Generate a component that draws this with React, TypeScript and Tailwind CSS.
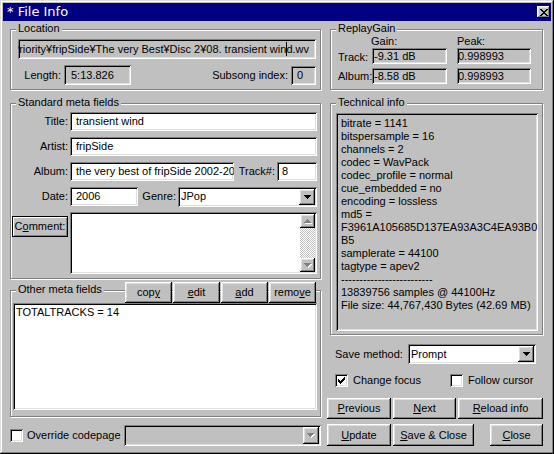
import React from 'react';

// Win98 style 3D edges
const sunken =
  'shadow-[inset_1px_1px_0_#808080,inset_-1px_-1px_0_#ffffff,inset_2px_2px_0_#000000,inset_-2px_-2px_0_#dfdfdf]';
const raised =
  'shadow-[inset_-1px_-1px_0_#000000,inset_1px_1px_0_#ffffff,inset_-2px_-2px_0_#808080,inset_2px_2px_0_#dfdfdf]';

function Pixels({ rows, color, shadow }: { rows: string[]; color: string; shadow?: string }) {
  const w = rows[0].length + (shadow ? 1 : 0);
  const h = rows.length + (shadow ? 1 : 0);
  const cells: React.ReactNode[] = [];
  rows.forEach((r, y) =>
    r.split('').forEach((c, x) => {
      if (c === 'x') {
        if (shadow) cells.push(<rect key={`s${x}-${y}`} x={x + 1} y={y + 1} width={1} height={1} fill={shadow} />);
      }
    })
  );
  rows.forEach((r, y) =>
    r.split('').forEach((c, x) => {
      if (c === 'x') cells.push(<rect key={`${x}-${y}`} x={x} y={y} width={1} height={1} fill={color} />);
    })
  );
  return (
    <svg width={w} height={h} viewBox={`0 0 ${w} ${h}`} shapeRendering="crispEdges">
      {cells}
    </svg>
  );
}

const downArrow = ['xxxxxxx', '.xxxxx.', '..xxx..', '...x...'];
const upArrow = ['...x...', '..xxx..', '.xxxxx.', 'xxxxxxx'];
const checkMark = ['......x', '.....xx', 'x...xxx', 'xx.xxx.', 'xxxxx..', '.xxx...', '..x....'];
const closeX = ['xx....xx', '.xx..xx.', '..xxxx..', '...xx...', '..xxxx..', '.xx..xx.', 'xx....xx'];

function Group({ label, className, children }: { label: string; className: string; children?: React.ReactNode }) {
  return (
    <div className={`relative border border-[#808080] shadow-[inset_1px_1px_0_#ffffff,1px_1px_0_#ffffff] ${className}`}>
      <span className="absolute left-[5px] top-[-8px] bg-[#c0c0c0] px-[2px] leading-[13px] whitespace-nowrap">{label}</span>
      {children}
    </div>
  );
}

function Edit({ value, className, gray }: { value: React.ReactNode; className: string; gray?: boolean }) {
  return (
    <div
      className={`flex items-center overflow-hidden whitespace-nowrap ${gray ? 'bg-[#c0c0c0]' : 'bg-white'} ${sunken} ${className}`}
    >
      {value}
    </div>
  );
}

function Combo({ value, className, disabled }: { value: string; className: string; disabled?: boolean }) {
  return (
    <div className={`flex items-stretch p-[2px] ${disabled ? 'bg-[#c0c0c0]' : 'bg-white'} ${sunken} ${className}`}>
      <span className="flex flex-1 items-center pl-[1px]">{value}</span>
      <div className={`flex w-[16px] items-center justify-center bg-[#c0c0c0] ${raised}`}>
        {disabled ? <Pixels rows={downArrow} color="#808080" shadow="#ffffff" /> : <Pixels rows={downArrow} color="#000000" />}
      </div>
    </div>
  );
}

function Btn({ children, className }: { children: React.ReactNode; className: string }) {
  return (
    <div className={`flex items-center justify-center whitespace-nowrap bg-[#c0c0c0] ${raised} ${className}`}>{children}</div>
  );
}

function Check({ checked }: { checked?: boolean }) {
  return (
    <div className={`flex h-[13px] w-[13px] shrink-0 items-center justify-center bg-white ${sunken}`}>
      {checked && <Pixels rows={checkMark} color="#000000" />}
    </div>
  );
}

function Label({ children, className }: { children: React.ReactNode; className: string }) {
  return <span className={`whitespace-nowrap text-right ${className}`}>{children}</span>;
}

const techLines = [
  'bitrate = 1141',
  'bitspersample = 16',
  'channels = 2',
  'codec = WavPack',
  'codec_profile = normal',
  'cue_embedded = no',
  'encoding = lossless',
  'md5 =',
  'F3961A105685D137EA93A3C4EA93B0',
  'B5',
  'samplerate = 44100',
  'tagtype = apev2',
  '-------------------------',
  '13839756 samples @ 44100Hz',
  'File size: 44,767,430 Bytes (42.69 MB)',
];

export default function App() {
  return (
    <div className="h-[454px] w-[554px] overflow-hidden bg-[#c0c0c0] p-[3px] font-['Liberation_Sans',Arial,sans-serif] text-[11px] leading-[13px] text-black shadow-[inset_-1px_-1px_0_#000000,inset_1px_1px_0_#dfdfdf,inset_-2px_-2px_0_#808080,inset_2px_2px_0_#ffffff]">
      {/* Title bar */}
      <div className="flex h-[18px] items-center bg-[#000080] pl-[4px] pr-[1px]">
        <span className="flex-1 font-['DejaVu_Sans',sans-serif] text-[13px] leading-[18px] text-white">* File Info</span>
        <div className={`flex h-[12px] w-[13px] items-center justify-center bg-[#c0c0c0] ${raised}`}>
          <Pixels rows={closeX} color="#000000" />
        </div>
      </div>

      <div className="flex">
        {/* Left column */}
        <div className="ml-[7px] flex w-[311px] flex-col">
          <Group label="Location" className="mt-[8px] h-[61px]">
            <Edit
              gray
              className="ml-[7px] mt-[9px] h-[20px] w-[298px] justify-end pr-[7px]"
              value={
                <span>
                  Priority¥fripSide¥The very Best¥Disc 2¥08. transient win
                  <span className="relative">
                    <span className="absolute left-0 top-[-1px] h-[14px] w-px bg-black" />
                  </span>
                  d.wv
                </span>
              }
            />
            <div className="mt-[6px] flex h-[20px] items-center">
              <Label className="w-[50px]">Length:</Label>
              <Edit gray className="ml-[3px] h-[20px] w-[67px] pl-[7px]" value="5:13.826" />
              <span className="flex-1" />
              <Label className="">Subsong index:</Label>
              <Edit gray className="ml-[3px] mr-[4px] h-[19px] w-[25px] pl-[6px]" value="0" />
            </div>
          </Group>

          <Group label="Standard meta fields" className="mt-[13px] h-[176px]">
            <div className="pt-[8px]">
              <div className="flex h-[19px] items-center">
                <Label className="w-[57px]">Title:</Label>
                <Edit className="ml-[2px] h-[19px] w-[247px] pl-[6px]" value="transient wind" />
              </div>
              <div className="mt-[6px] flex h-[19px] items-center">
                <Label className="w-[57px]">Artist:</Label>
                <Edit className="ml-[2px] h-[19px] w-[247px] pl-[6px]" value="fripSide" />
              </div>
              <div className="mt-[6px] flex h-[19px] items-center">
                <Label className="w-[57px]">Album:</Label>
                <Edit className="ml-[2px] h-[19px] w-[164px] pl-[6px]" value="the very best of fripSide 2002-2006" />
                <Label className="w-[41px]">Track#:</Label>
                <Edit className="ml-[2px] h-[19px] w-[40px] pl-[5px]" value="8" />
              </div>
              <div className="mt-[6px] flex h-[19px] items-center">
                <Label className="w-[57px]">Date:</Label>
                <Edit className="ml-[2px] h-[19px] w-[68px] pl-[6px]" value="2006" />
                <Label className="w-[38px]">Genre:</Label>
                <Combo className="ml-[2px] h-[20px] w-[139px]" value="JPop" />
              </div>
              <div className="mt-[6px] flex h-[62px]">
                <div className="w-[59px]">
                  <div className="ml-[1px] mt-[4px] h-[21px] w-[56px] border border-black">
                    <div className="flex h-full items-center justify-center shadow-[inset_1px_1px_0_#ffffff,inset_-1px_-1px_0_#808080]">
                      C<u>o</u>mment:
                    </div>
                  </div>
                </div>
                <div className={`flex h-[62px] w-[247px] justify-end bg-white p-[2px] ${sunken}`}>
                  <div className="flex w-[15px] flex-col">
                    <div className={`flex h-[14px] items-center justify-center bg-[#c0c0c0] ${raised}`}>
                      <Pixels rows={upArrow} color="#808080" shadow="#ffffff" />
                    </div>
                    <div className="flex-1 bg-[repeating-conic-gradient(#ffffff_0_25%,#c0c0c0_0_50%)] bg-[length:2px_2px]" />
                    <div className={`flex h-[14px] items-center justify-center bg-[#c0c0c0] ${raised}`}>
                      <Pixels rows={downArrow} color="#808080" shadow="#ffffff" />
                    </div>
                  </div>
                </div>
              </div>
            </div>
          </Group>

          <Group label="Other meta fields" className="mt-[11px] h-[127px]">
            <div className="absolute right-[4px] top-[-9px] flex h-[21px] gap-[1px]">
              <Btn className="w-[47px]">
                cop<u>y</u>
              </Btn>
              <Btn className="w-[47px]">
                <u>e</u>dit
              </Btn>
              <Btn className="w-[47px]">
                <u>a</u>dd
              </Btn>
              <Btn className="w-[47px]">
                remo<u>v</u>e
              </Btn>
            </div>
            <div className={`ml-[2px] mt-[12px] h-[107px] w-[304px] bg-white pl-[3px] pt-[3px] ${sunken}`}>TOTALTRACKS = 14</div>
          </Group>

          <div className="mt-[8px] flex h-[21px] items-center">
            <Check />
            <span className="ml-[4px] whitespace-nowrap">Override codepage</span>
            <Combo disabled className="ml-auto h-[21px] w-[197px]" value="" />
          </div>
        </div>

        {/* Right column */}
        <div className="ml-[6px] flex w-[216px] flex-col">
          <Group label="ReplayGain" className="ml-[3px] mt-[8px] h-[61px] w-[213px]">
            <div className="mt-[5px] flex h-[13px]">
              <span className="w-[40px]" />
              <span className="w-[86px]">Gain:</span>
              <span>Peak:</span>
            </div>
            <div className="flex h-[16px] items-center">
              <span className="mt-[3px] w-[41px] pl-[7px]">Track:</span>
              <Edit gray className="h-[16px] w-[75px] pl-[2px]" value="-9.31 dB" />
              <Edit gray className="ml-[10px] h-[16px] w-[74px] pl-[1px]" value="0.998993" />
            </div>
            <div className="mt-[4px] flex h-[16px] items-center">
              <span className="mt-[1px] w-[41px] pl-[7px]">Album:</span>
              <Edit gray className="h-[16px] w-[75px] pl-[2px]" value="-8.58 dB" />
              <Edit gray className="ml-[10px] h-[16px] w-[74px] pl-[1px]" value="0.998993" />
            </div>
          </Group>

          <Group label="Technical info" className="ml-[3px] mt-[13px] h-[232px] w-[213px]">
            <div className={`ml-[5px] mt-[9px] h-[218px] w-[202px] bg-[#c0c0c0] pl-[5px] pt-[4px] ${sunken}`}>
              {techLines.map((l) => (
                <div key={l} className="h-[13px] whitespace-nowrap">
                  {l}
                </div>
              ))}
            </div>
          </Group>

          <div className="mt-[9px] flex h-[20px] items-center pl-[8px]">
            <span className="w-[73px] whitespace-nowrap">Save method:</span>
            <Combo className="h-[20px] w-[128px]" value="Prompt" />
          </div>

          <div className="mt-[10px] flex h-[13px] items-center pl-[8px]">
            <div className="flex w-[115px] items-center">
              <Check checked />
              <span className="ml-[5px] whitespace-nowrap">Change focus</span>
            </div>
            <Check />
            <span className="ml-[5px] whitespace-nowrap">Follow cursor</span>
          </div>

          <div className="mt-[11px] flex h-[21px]">
            <Btn className="w-[64px]">
              <u>P</u>revious
            </Btn>
            <Btn className="ml-[2px] w-[63px]">
              <u>N</u>ext
            </Btn>
            <Btn className="ml-[2px] w-[85px]">
              <u>R</u>eload info
            </Btn>
          </div>
          <div className="mt-[5px] flex h-[22px]">
            <Btn className="w-[64px]">
              <u>U</u>pdate
            </Btn>
            <Btn className="ml-[2px] w-[81px]">
              <u>S</u>ave &amp; Close
            </Btn>
            <Btn className="ml-auto w-[53px]">
              <u>C</u>lose
            </Btn>
          </div>
        </div>
      </div>
    </div>
  );
}
